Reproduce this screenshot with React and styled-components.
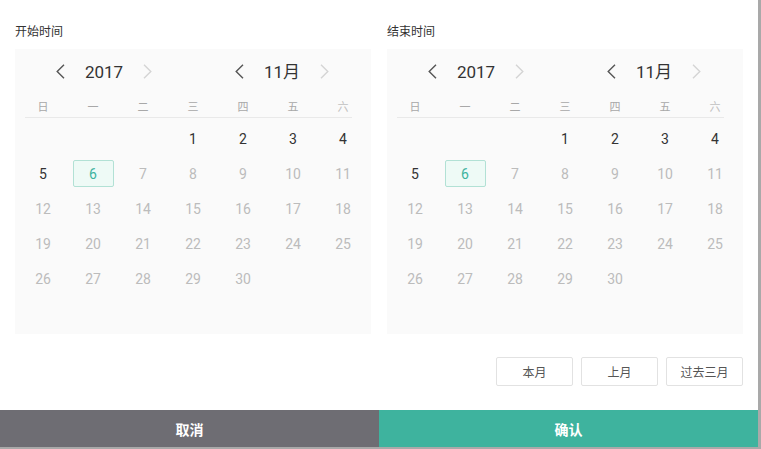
import React from "react";
import styled, { createGlobalStyle } from "styled-components";

const Global = createGlobalStyle`
  html, body { margin: 0; padding: 0; background: #fff; overflow: hidden; }
  * { box-sizing: border-box; }
  body { font-family: Roboto, "Noto Sans CJK SC", sans-serif; }
`;

const Page = styled.div`
  width: 761px;
  height: 449px;
  border-right: 3px solid #a9a9a9;
  border-bottom: 2px solid #a9a9a9;
  display: flex;
  flex-direction: column;
  background: #fff;
`;

const Content = styled.div`
  padding: 23px 15px 0;
  flex: 1;
  display: flex;
  flex-direction: column;
`;

const Columns = styled.div`
  display: grid;
  grid-template-columns: 356px 356px;
  column-gap: 16px;
`;

const Column = styled.div`
  display: flex;
  flex-direction: column;
`;

const Label = styled.div`
  font-size: 12px;
  line-height: 18px;
  height: 18px;
  color: #333;
  margin-bottom: 8px;
`;

const Panel = styled.div`
  background: #fafafa;
  height: 285px;
  display: flex;
  flex-direction: column;
`;

const Header = styled.div`
  height: 45px;
  display: grid;
  grid-template-columns: 1fr 1fr;
  align-items: center;
`;

const Switcher = styled.div`
  display: flex;
  justify-content: center;
  align-items: center;
  gap: 20px;
`;

const SwitchTitle = styled.span`
  font-size: 17px;
  color: #333;
  line-height: 20px;
  min-width: ${(p) => p.$w}px;
  text-align: center;
`;

const Chevron = styled.svg`
  width: 9px;
  height: 15px;
  display: block;
  polyline {
    fill: none;
    stroke: ${(p) => (p.$disabled ? "#d4d4d4" : "#555")};
    stroke-width: 1.4;
  }
`;

const WeekRow = styled.div`
  display: grid;
  grid-template-columns: repeat(7, 50px);
  padding: 0 3px;
  height: 23px;
  align-items: center;
`;

const WeekDay = styled.span`
  text-align: center;
  font-size: 11px;
  color: ${(p) => (p.$light ? "#c0c0c0" : "#a8a8a8")};
`;

const Divider = styled.div`
  height: 1px;
  background: #e9e9e9;
  margin: 0 19px 0 10px;
`;

const Days = styled.div`
  display: grid;
  grid-template-columns: repeat(7, 50px);
  grid-auto-rows: 35px;
  padding: 3px 3px 0;
`;

const Cell = styled.div`
  display: flex;
  align-items: center;
  justify-content: center;
`;

const Day = styled.span`
  font-size: 14px;
  display: flex;
  align-items: center;
  justify-content: center;
  width: 41px;
  height: 27px;
  border-radius: 2px;
  color: ${(p) => (p.$state === "active" ? "#333" : p.$state === "selected" ? "#3eb39e" : "#bcbcbc")};
  border: 1px solid ${(p) => (p.$state === "selected" ? "#b2e1d5" : "transparent")};
  background: ${(p) => (p.$state === "selected" ? "#eefaf6" : "transparent")};
`;

const Actions = styled.div`
  display: flex;
  justify-content: flex-end;
  gap: 8px;
  margin-top: 23px;
`;

const QuickButton = styled.button`
  width: 77px;
  height: 29px;
  border: 1px solid #e2e2e2;
  border-radius: 2px;
  background: #fff;
  font-family: Roboto, "Noto Sans CJK SC", sans-serif;
  font-size: 12px;
  color: #555;
  padding: 0;
`;

const Footer = styled.div`
  height: 37px;
  display: grid;
  grid-template-columns: 379px 1fr;
`;

const FooterButton = styled.button`
  border: none;
  padding: 0;
  font-family: Roboto, "Noto Sans CJK SC", sans-serif;
  font-size: 14px;
  font-weight: bold;
  color: #fff;
  background: ${(p) => (p.$primary ? "#3eb39e" : "#6e6d73")};
`;

const Left = ({ disabled }) => (
  <Chevron viewBox="0 0 9 15" $disabled={disabled}>
    <polyline points="8,0.8 1.2,7.5 8,14.2" />
  </Chevron>
);
const Right = ({ disabled }) => (
  <Chevron viewBox="0 0 9 15" $disabled={disabled}>
    <polyline points="1,0.8 7.8,7.5 1,14.2" />
  </Chevron>
);

const weekdays = ["日", "一", "二", "三", "四", "五", "六"];

function Calendar() {
  const cells = [];
  for (let i = 0; i < 3; i++) cells.push(null);
  for (let d = 1; d <= 30; d++) cells.push(d);
  return (
    <Panel>
      <Header>
        <Switcher>
          <Left />
          <SwitchTitle $w={36}>2017</SwitchTitle>
          <Right disabled />
        </Switcher>
        <Switcher>
          <Left />
          <SwitchTitle $w={34}>11月</SwitchTitle>
          <Right disabled />
        </Switcher>
      </Header>
      <WeekRow>
        {weekdays.map((w, i) => (
          <WeekDay key={w} $light={i === 6}>
            {w}
          </WeekDay>
        ))}
      </WeekRow>
      <Divider />
      <Days>
        {cells.map((d, i) => (
          <Cell key={i}>
            {d && (
              <Day $state={d < 6 ? "active" : d === 6 ? "selected" : "disabled"}>{d}</Day>
            )}
          </Cell>
        ))}
      </Days>
    </Panel>
  );
}

export default function App() {
  return (
    <>
      <Global />
      <Page>
        <Content>
          <Columns>
            <Column>
              <Label>开始时间</Label>
              <Calendar />
            </Column>
            <Column>
              <Label>结束时间</Label>
              <Calendar />
            </Column>
          </Columns>
          <Actions>
            <QuickButton>本月</QuickButton>
            <QuickButton>上月</QuickButton>
            <QuickButton>过去三月</QuickButton>
          </Actions>
        </Content>
        <Footer>
          <FooterButton>取消</FooterButton>
          <FooterButton $primary>确认</FooterButton>
        </Footer>
      </Page>
    </>
  );
}
